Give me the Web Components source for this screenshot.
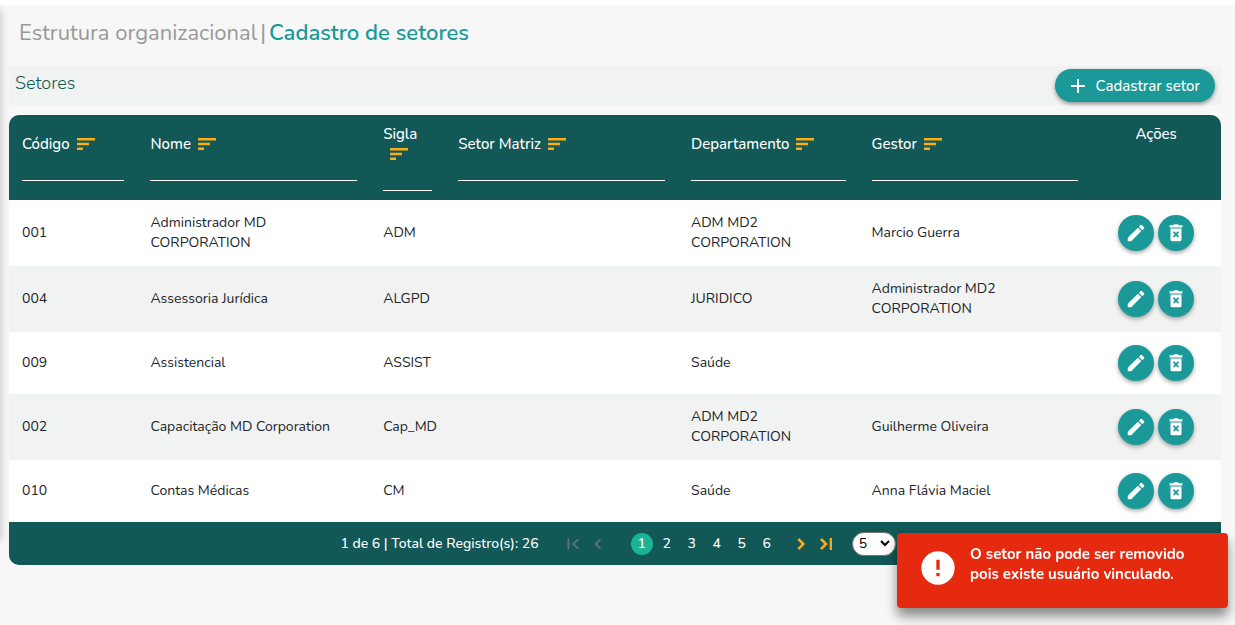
<!DOCTYPE html>
<html lang="pt-BR">
<head>
<meta charset="utf-8">
<meta name="viewport" content="width=device-width, initial-scale=1">
<title>Cadastro de setores</title>
<style>
  :root {
    --dark: #115857;
    --teal: #1a9998;
    --amber: #fbac18;
    --stripe: #f0f3f2;
    --page: #f7f7f7;
  }
  html { background: #fff; }
  body { margin: 0; font-family: Nunito, Lato, "Open Sans", sans-serif; font-size: 15px; line-height: 20px; color: #212529; }
</style>
</head>
<body>
<sector-app></sector-app>
<script>
const define = (name, markup, init) => {
  const template = document.createElement('template');
  template.innerHTML = '<style>*{box-sizing:border-box}button,input,select{font:inherit;color:inherit}</style>' + markup;
  customElements.define(name, class extends HTMLElement {
    constructor() {
      super();
      this.attachShadow({ mode: 'open' }).append(template.content.cloneNode(true));
    }
    connectedCallback() {
      if (init && !this.ready) { this.ready = true; init(this, this.shadowRoot); }
    }
  });
};

const icons = {
  edit: 'M3 17.25V21h3.75L17.81 9.94l-3.75-3.75L3 17.25zM20.71 7.04a1 1 0 0 0 0-1.41l-2.34-2.34a1 1 0 0 0-1.41 0l-1.83 1.83 3.75 3.75 1.83-1.83z',
  remove: 'M5 3.5h4L10 2.5h4l1 1h4v2.500H5zM6 7h12v12a2 2 0 0 1-2 2H8a2 2 0 0 1-2-2zm2.6 4.2 2 2.3-2 2.3 1.2 1.2 2.2-2.1 2.2 2.1 1.2-1.2-2-2.3 2-2.3-1.2-1.2-2.2 2.1-2.2-2.1z',
  plus: 'M19 13h-6v6h-2v-6H5v-2h6V5h2v6h6z',
  sort: 'M3 18h6v-2.500H3zM3 6v2.500h18V6zm0 7.250h12v-2.500H3z',
  first: 'M18.41 16.59 13.82 12l4.59-4.59L17 6l-6 6 6 6zM6 6h2v12H6z',
  prev: 'M15.41 7.41 14 6l-6 6 6 6 1.41-1.41L10.83 12z',
  next: 'M10 5.500 8 7.500 12.5 12 8 16.500l2 2 6.500-6.500z',
  last: 'M5.500 7.500 10 12l-4.500 4.500 2 2L14 12 7.500 5.500zM16 5.500h2.500v13H16z',
  alert: 'M12 2a10 10 0 1 0 0 20 10 10 0 0 0 0-20zm1 15h-2v-2h2zm0-4h-2V7h2z'
};

define('ui-icon', `
  <style>
    :host { display: inline-block; width: 22px; height: 22px; flex: none; }
    svg { display: block; width: 100%; height: 100%; fill: currentColor; }
  </style>
  <svg viewBox="0 0 24 24" aria-hidden="true"><path fill-rule="evenodd"/></svg>`,
  (host, root) => root.querySelector('path').setAttribute('d', icons[host.getAttribute('name')]));

define('round-action', `
  <style>
    :host { display: block; }
    button { display: grid; place-items: center; width: 36px; height: 36px; padding: 0; border: 0; border-radius: 50%;
      background: var(--teal); color: #fff; box-shadow: 0 2px 4px rgba(0,0,0,.35); cursor: pointer; }
  </style>
  <button type="button"><ui-icon></ui-icon></button>`,
  (host, root) => {
    root.querySelector('button').setAttribute('aria-label', host.getAttribute('label'));
    const icon = document.createElement('ui-icon');
    icon.setAttribute('name', host.getAttribute('icon'));
    root.querySelector('ui-icon').replaceWith(icon);
  });

define('page-heading', `
  <style>
    :host { display: block; padding: 13px 19px 17px; }
    h1 { display: flex; gap: 3px; margin: 0; font-size: 22px; line-height: 31px; font-weight: 400; color: #999; }
    strong { font-weight: 600; color: var(--teal); }
  </style>
  <h1><slot name="area"></slot><span>|</span><strong><slot></slot></strong></h1>`);

define('section-bar', `
  <style>
    :host { display: flex; justify-content: space-between; align-items: flex-start; height: 39px; padding: 3px 6px; background: var(--stripe); }
    h2 { margin: 0; padding-top: 2px; font-size: 18px; line-height: 24px; font-weight: 300; color: var(--dark); }
    button { display: flex; align-items: center; gap: 6px; height: 33px; padding: 0 15px 0 11px; border: 0; border-radius: 17px;
      background: var(--teal); color: #fff; font-size: 15px; font-weight: 500; box-shadow: 0 2px 4px rgba(0,0,0,.4); cursor: pointer; }
    ui-icon { width: 24px; height: 24px; }
  </style>
  <h2><slot></slot></h2>
  <button type="button"><ui-icon name="plus"></ui-icon><slot name="action"></slot></button>`);

define('column-filter', `
  <style>
    :host { display: block; }
    label { display: flex; flex-wrap: wrap; align-items: center; }
    ui-icon { width: 24px; height: 24px; margin: -2px 0 -2px 4px; color: var(--amber); }
    input { display: block; width: 100%; height: 27px; padding: 0; border: 0; border-bottom: 1px solid #fff; border-radius: 0; background: none; outline: 0; }
  </style>
  <label for="filter"><span><slot></slot></span><ui-icon name="sort"></ui-icon></label>
  <input id="filter" type="text">`);

const rows = [
  ['001', 'Administrador MD CORPORATION', 'ADM', '', 'ADM MD2 CORPORATION', 'Marcio Guerra'],
  ['004', 'Assessoria Jurídica', 'ALGPD', '', 'JURIDICO', 'Administrador MD2 CORPORATION'],
  ['009', 'Assistencial', 'ASSIST', '', 'Saúde', ''],
  ['002', 'Capacitação MD Corporation', 'Cap_MD', '', 'ADM MD2 CORPORATION', 'Guilherme Oliveira'],
  ['010', 'Contas Médicas', 'CM', '', 'Saúde', 'Anna Flávia Maciel']
];

define('sector-table', `
  <style>
    :host { display: block; }
    table { width: 100%; border-collapse: collapse; table-layout: fixed; }
    .code { width: 10.6%; } .wide { width: 19.2%; } .short { width: 6.2%; } .dept { width: 14.9%; }
    thead { background: var(--dark); color: #fff; }
    th { padding: 9px 13px; font-weight: 500; text-align: left; vertical-align: middle; }
    th:last-child { text-align: center; vertical-align: top; }
    tbody { background: #fff; font-size: 14px; }
    tbody tr:nth-child(even) { background: var(--stripe); }
    td { padding: 13px; overflow-wrap: break-word; }
    td:last-child { padding: 13px 0; }
    td:nth-child(3) { padding-right: 0; }
    td:nth-child(2), td:nth-child(6) { padding-right: 30px; }
    .actions { display: flex; justify-content: center; gap: 4px; }
  </style>
  <table>
    <colgroup><col class="code"><col class="wide"><col class="short"><col class="wide"><col class="dept"><col class="wide"><col></colgroup>
    <thead><tr>
      <th><column-filter>Código</column-filter></th><th><column-filter>Nome</column-filter></th>
      <th><column-filter>Sigla</column-filter></th><th><column-filter>Setor Matriz</column-filter></th>
      <th><column-filter>Departamento</column-filter></th><th><column-filter>Gestor</column-filter></th>
      <th>Ações</th>
    </tr></thead>
    <tbody></tbody>
  </table>`,
  (host, root) => {
    root.querySelector('tbody').innerHTML = rows.map(row => '<tr>' + row.map(v => `<td>${v}</td>`).join('') +
      '<td><div class="actions"><round-action icon="edit" label="Editar"></round-action><round-action icon="remove" label="Remover"></round-action></div></td></tr>').join('');
  });

define('table-pager', `
  <style>
    :host { display: flex; justify-content: center; align-items: center; height: 43px; padding-left: 6px; background: var(--dark); color: #fff; font-size: 14px; font-weight: 500; }
    nav { display: flex; align-items: center; }
    button { display: grid; place-items: center; width: 25px; height: 24px; padding: 0; border: 0; background: none; color: var(--amber); }
    button:disabled { color: #56757b; }
    .first { margin-left: 22px; }
    ol { display: flex; gap: 3px; margin: 0 11px 0 20px; padding: 0; list-style: none; }
    a { display: block; width: 22px; line-height: 22px; border-radius: 50%; text-align: center; text-decoration: none; color: inherit; }
    a[aria-current] { background: #1bb394; }
    select { appearance: none; width: 44px; height: 24px; margin-left: 13px; padding: 0 6px; border: 1px solid #767676; border-radius: 12px; color: #000; font-weight: 400;
      background: #fff url("data:image/svg+xml,%3Csvg xmlns='http://www.w3.org/2000/svg' viewBox='0 0 10 7'%3E%3Cpath d='M1 1l4 4 4-4' fill='none' stroke='%23000' stroke-width='2'/%3E%3C/svg%3E") no-repeat right 5px center / 10px 7px; }
  </style>
  <span>1 de 6 | Total de Registro(s): 26</span>
  <nav aria-label="Paginação">
    <button class="first" type="button" disabled aria-label="Primeira"><ui-icon name="first"></ui-icon></button>
    <button type="button" disabled aria-label="Anterior"><ui-icon name="prev"></ui-icon></button>
    <ol><li><a href="#1" aria-current="page">1</a></li><li><a href="#2">2</a></li><li><a href="#3">3</a></li><li><a href="#4">4</a></li><li><a href="#5">5</a></li><li><a href="#6">6</a></li></ol>
    <button type="button" aria-label="Próxima"><ui-icon name="next"></ui-icon></button>
    <button type="button" aria-label="Última"><ui-icon name="last"></ui-icon></button>
  </nav>
  <select aria-label="Registros por página"><option>5</option><option>10</option><option>20</option></select>`);

define('toast-message', `
  <style>
    :host { position: fixed; right: 7px; bottom: 17px; display: flex; gap: 12px; width: 331px; min-height: 75px; padding: 11px 36px 12px 21px; box-sizing: border-box;
      border-radius: 4px; background: #e62a10; color: #fff; font-weight: 700; box-shadow: 0 8px 12px rgba(0,0,0,.45); }
    ui-icon { width: 40px; height: 40px; margin-top: 4px; }
    p { margin: 0; }
  </style>
  <ui-icon name="alert"></ui-icon><p><slot></slot></p>`);

define('sector-app', `
  <style>
    :host { display: block; margin-top: 5px; min-height: calc(100vh - 5px); background: var(--page); box-sizing: border-box; }
    .body { padding: 0 14px 0 9px; }
    .edge { position: absolute; left: -10px; top: 10px; width: 10px; height: 530px; box-shadow: 0 0 8px rgba(0,0,0,.25); }
    .card { margin-top: 9px; border-top: 1px solid #fff; }
    .round { border-radius: 10px; overflow: hidden; }
  </style>
  <div class="edge"></div>
  <page-heading><span slot="area">Estrutura organizacional</span>Cadastro de setores</page-heading>
  <div class="body">
    <section-bar>Setores<span slot="action">Cadastrar setor</span></section-bar>
    <div class="card"><div class="round"><sector-table></sector-table><table-pager></table-pager></div></div>
  </div>
  <toast-message role="alert">O setor não pode ser removido pois existe usuário vinculado.</toast-message>`);
</script>
</body>
</html>
